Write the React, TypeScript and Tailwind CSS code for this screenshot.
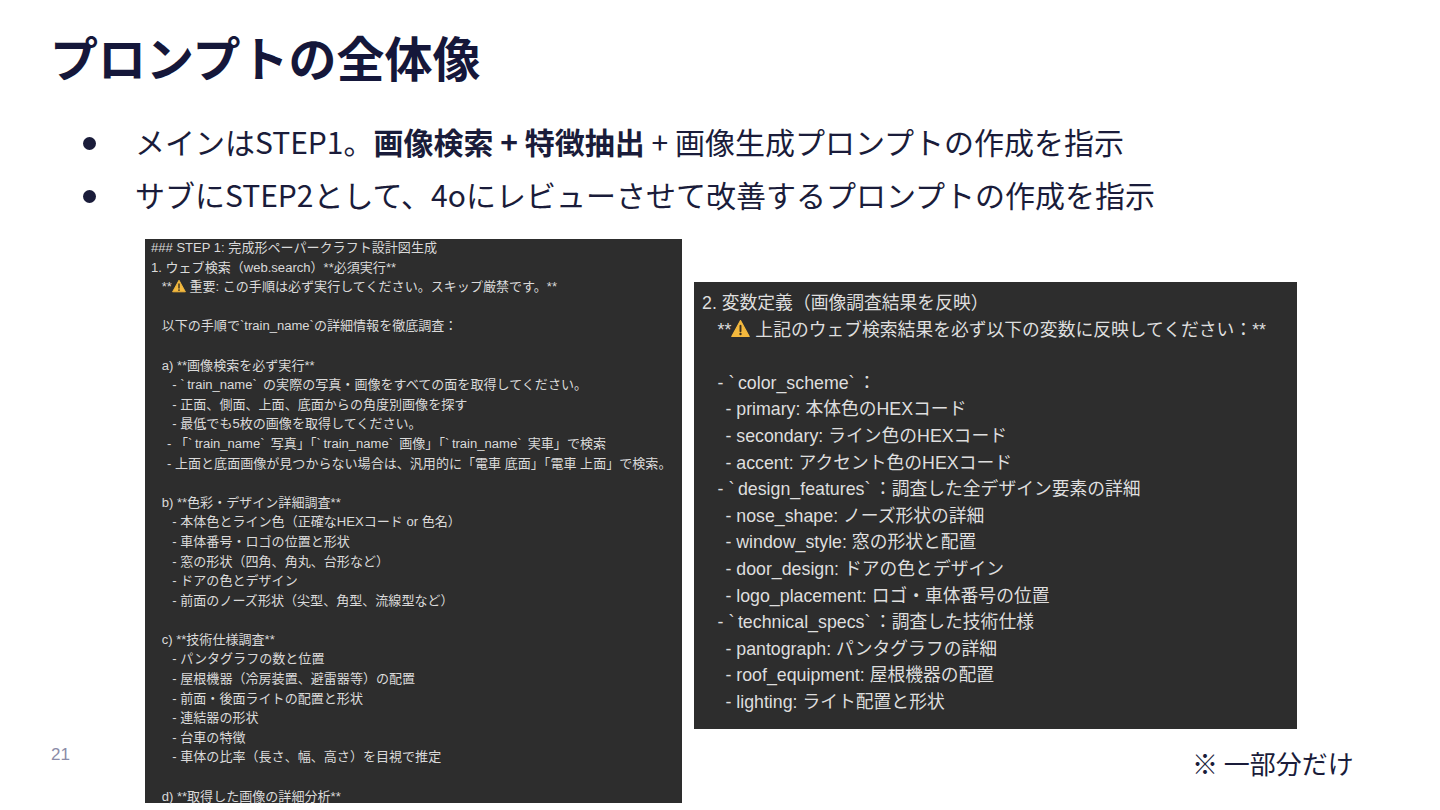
const leftLines = [
  "### STEP 1: 完成形ペーパークラフト設計図生成",
  "1. ウェブ検索（web.search）**必須実行**",
  "  **⚠ 重要: この手順は必ず実行してください。スキップ厳禁です。**",
  "",
  "  以下の手順で`train_name`の詳細情報を徹底調査：",
  "",
  "  a) **画像検索を必ず実行**",
  "    - `\u2009train_name`\u2009 の実際の写真・画像をすべての面を取得してください。",
  "    - 正面、側面、上面、底面からの角度別画像を探す",
  "    - 最低でも5枚の画像を取得してください。",
  "   - 「`\u2009train_name`\u2009 写真」「`\u2009train_name`\u2009 画像」「`\u2009train_name`\u2009 実車」で検索",
  "   - 上面と底面画像が見つからない場合は、汎用的に「電車 底面」「電車 上面」で検索。",
  "",
  "  b) **色彩・デザイン詳細調査**",
  "    - 本体色とライン色（正確なHEXコード or 色名）",
  "    - 車体番号・ロゴの位置と形状",
  "    - 窓の形状（四角、角丸、台形など）",
  "    - ドアの色とデザイン",
  "    - 前面のノーズ形状（尖型、角型、流線型など）",
  "",
  "  c) **技術仕様調査**",
  "    - パンタグラフの数と位置",
  "    - 屋根機器（冷房装置、避雷器等）の配置",
  "    - 前面・後面ライトの配置と形状",
  "    - 連結器の形状",
  "    - 台車の特徴",
  "    - 車体の比率（長さ、幅、高さ）を目視で推定",
  "",
  "  d) **取得した画像の詳細分析**",
];

const rightLines = [
  "2. 変数定義（画像調査結果を反映）",
  "  **⚠ 上記のウェブ検索結果を必ず以下の変数に反映してください：**",
  "",
  "  - `\u2009color_scheme`\u2009：",
  "   - primary: 本体色のHEXコード",
  "   - secondary: ライン色のHEXコード",
  "   - accent: アクセント色のHEXコード",
  "  - `\u2009design_features`\u2009：調査した全デザイン要素の詳細",
  "   - nose_shape: ノーズ形状の詳細",
  "   - window_style: 窓の形状と配置",
  "   - door_design: ドアの色とデザイン",
  "   - logo_placement: ロゴ・車体番号の位置",
  "  - `\u2009technical_specs`\u2009：調査した技術仕様",
  "   - pantograph: パンタグラフの詳細",
  "   - roof_equipment: 屋根機器の配置",
  "   - lighting: ライト配置と形状",
];

function Warn({ size }: { size: number }) {
  return (
    <svg width={size} height={size} viewBox="0 0 24 24" className="inline-block align-[-2px]">
      <path d="M12 2 L23 22 H1 Z" fill="#f4b93e" stroke="#f4b93e" strokeWidth="1.5" strokeLinejoin="round" />
      <path d="M12 8.5 V15.5" stroke="#3a3020" strokeWidth="2.4" strokeLinecap="round" />
      <circle cx="12" cy="19" r="1.5" fill="#3a3020" />
    </svg>
  );
}

function CodeLine({ text, iconSize, indentClass }: { text: string; iconSize: number; indentClass: string }) {
  if (!text) return <div className="h-[1lh]" />;
  // leading spaces are wider in the original font than in Liberation Sans
  const body = text.trimStart();
  const indent = text.slice(0, text.length - body.length);
  const parts = body.split("⚠");
  return (
    <div className="whitespace-pre">
      <span className={indentClass}>{indent}</span>
      {parts[0]}
      {parts.length > 1 && <Warn size={iconSize} />}
      {parts[1]}
    </div>
  );
}

export default function App() {
  return (
    <div className="relative h-[810px] w-[1440px] overflow-hidden bg-white font-['Liberation_Sans','Noto_Sans_CJK_JP',sans-serif] text-[#1a1c3a]">
      <h1 className="pl-[50px] pt-[22px] font-['Noto_Sans_CJK_JP',sans-serif] text-[48px] font-bold leading-[68px] text-[#15173a]">
        プロンプトの全体像
      </h1>

      <ul className="mt-[28px] flex flex-col gap-[7px] pl-[83px] font-['Noto_Sans_CJK_JP',sans-serif] text-[30px] leading-[46px]">
        <li className="flex items-center">
          <span className="mr-[39px] h-[13px] w-[13px] translate-y-[2px] rounded-full bg-[#1a1c3a]" />
          <span>
            メインはSTEP1。<b className="font-bold">画像検索 + 特徴抽出</b> + 画像生成プロンプトの作成を指示
          </span>
        </li>
        <li className="flex items-center">
          <span className="mr-[39px] h-[13px] w-[13px] translate-y-[2px] rounded-full bg-[#1a1c3a]" />
          <span>サブにSTEP2として、4oにレビューさせて改善するプロンプトの作成を指示</span>
        </li>
      </ul>

      <div className="mt-[22px] flex items-start gap-[12px] pl-[145px]">
        <div className="h-[564px] w-[537px] bg-[#2d2d2d] pl-[6px] text-[13.05px] leading-[19.6px] text-[#dadada]">
          <div className="-mt-[1px]">
            {leftLines.map((line, i) => (
              <CodeLine key={i} text={line} iconSize={14} indentClass="[word-spacing:0.13em]" />
            ))}
          </div>
        </div>
        <div className="mt-[43px] h-[447px] w-[603px] overflow-hidden bg-[#2d2d2d] pl-[8px] pt-[8px] text-[17.8px] leading-[26.6px] text-[#dedede]">
          {rightLines.map((line, i) => (
            <CodeLine key={i} text={line} iconSize={19} indentClass="[word-spacing:0.16em]" />
          ))}
        </div>
      </div>

      <div className="absolute left-[51px] top-[745px] text-[17px] leading-[20px] text-[#8b8ca8]">21</div>
      <div className="absolute left-[1192px] top-[745px] font-['Noto_Sans_CJK_JP',sans-serif] text-[26px] leading-[36px] text-[#1a1c3a]">
        ※ 一部分だけ
      </div>
    </div>
  );
}
